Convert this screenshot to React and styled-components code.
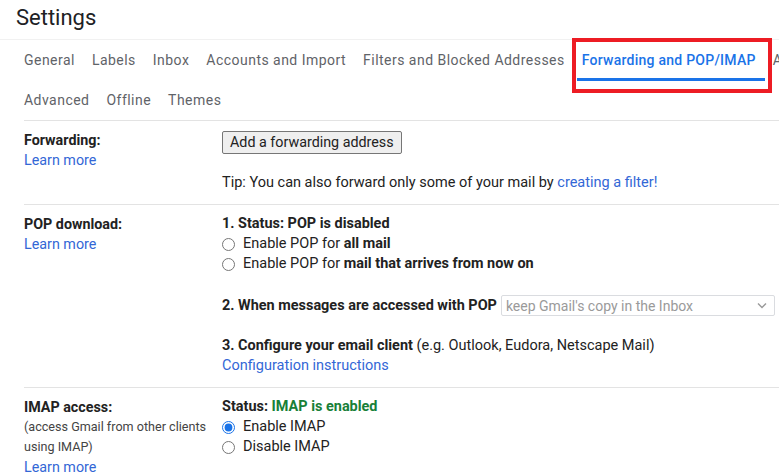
import React from "react";
import styled, { createGlobalStyle } from "styled-components";

const Global = createGlobalStyle`
  html, body { margin: 0; padding: 0; background: #fff; }
  body { font-family: Roboto, "Noto Sans", Arial, sans-serif; color: #222; overflow: hidden; }
  * { box-sizing: border-box; }
`;

const Page = styled.div`
  width: 779px;
  height: 476px;
  overflow: hidden;
  background: #fff;
`;

const TitleBar = styled.header`
  height: 40px;
  padding-left: 16px;
  display: flex;
  align-items: center;
  border-bottom: 1px solid #f1f1f1;
`;

const Title = styled.h1`
  margin: 0;
  font-family: Roboto, "Open Sans", sans-serif;
  font-size: 22px;
  font-weight: 400;
  color: #202124;
  line-height: 28px;
  margin-top: -4px;
`;

const TabRow = styled.nav`
  display: flex;
  flex-wrap: nowrap;
  height: 40px;
  padding-left: 16px;
  gap: 1px;
`;

const Tab = styled.div`
  position: relative;
  flex: none;
  height: 40px;
  padding: 0 8px;
  display: flex;
  align-items: center;
  white-space: nowrap;
  font-size: 14px;
  letter-spacing: ${(p) => (p.$active ? 0.25 : 0.47)}px;
  font-weight: ${(p) => (p.$active ? 500 : 400)};
  color: ${(p) => (p.$active ? "#1a73e8" : "#5f6368")};
  ${(p) =>
    p.$active &&
    `
    &::before {
      content: "";
      position: absolute;
      left: 3px;
      right: -1px;
      bottom: -1px;
      height: 3px;
      background: #1a73e8;
    }
    &::after {
      content: "";
      position: absolute;
      left: -2px;
      right: -8px;
      top: -2px;
      bottom: -13px;
      border: 4px solid #ed1c24;
    }
  `}
`;

const Body = styled.main`
  padding-left: 24px;
`;

const Section = styled.section`
  display: grid;
  grid-template-columns: 198px 1fr;
  padding: 9px 0 11px;
  border-top: 1px solid #e3e3e3;
  font-size: 14.5px;
  line-height: 20px;
`;

const LabelCol = styled.div`
  display: flex;
  flex-direction: column;
  font-size: 14.3px;
`;

const Label = styled.div`
  font-weight: 700;
  color: #222;
`;

const SubLabel = styled.div`
  font-size: 12.6px;
  color: #444;
`;

const Link = styled.a`
  color: #3367d6;
  text-decoration: none;
  cursor: pointer;
`;

const Content = styled.div`
  display: flex;
  flex-direction: column;
  color: #222;
`;

const Line = styled.div`
  display: flex;
  align-items: center;
  min-height: 20px;
  white-space: nowrap;
  margin-top: ${(p) => p.$gap || 0}px;
`;

const Strong = styled.b`
  font-weight: 700;
  font-size: 14.45px;
`;

const Green = styled.b`
  font-weight: 700;
  font-size: 14.45px;
  color: #188038;
`;

const Button = styled.button`
  align-self: flex-start;
  height: 23px;
  margin-top: 1px;
  padding: 0 7px;
  font-family: Roboto, sans-serif;
  font-size: 14.3px;
  color: #222;
  background: #efefef;
  border: 1px solid #767676;
  border-radius: 2px;
  line-height: 21px;
`;

const Radio = styled.input.attrs({ type: "radio" })`
  width: 13px;
  height: 13px;
  margin: 0 8px 0 0;
  accent-color: #1a73e8;
`;

const SelectBox = styled.div`
  position: relative;
  margin-left: 4px;
  width: 274px;
  height: 21px;
  border: 1px solid #dadce0;
  border-radius: 2px;
  display: flex;
  align-items: center;
  padding-left: 4px;
  color: #9a9a9a;
  font-size: 14px;
`;

const Chevron = styled.svg`
  position: absolute;
  right: 7px;
  top: 6px;
`;

export default function App() {
  return (
    <Page>
      <Global />
      <TitleBar>
        <Title>Settings</Title>
      </TitleBar>
      <TabRow>
        <Tab>General</Tab>
        <Tab>Labels</Tab>
        <Tab>Inbox</Tab>
        <Tab>Accounts and Import</Tab>
        <Tab>Filters and Blocked Addresses</Tab>
        <Tab $active>Forwarding and POP/IMAP</Tab>
        <Tab>Add-ons</Tab>
        <Tab>Chat and Meet</Tab>
      </TabRow>
      <TabRow>
        <Tab>Advanced</Tab>
        <Tab>Offline</Tab>
        <Tab>Themes</Tab>
      </TabRow>
      <Body>
        <Section>
          <LabelCol>
            <Label>Forwarding:</Label>
            <Link>Learn more</Link>
          </LabelCol>
          <Content>
            <Button>Add a forwarding address</Button>
            <Line $gap={19}>
              Tip: You can also forward only some of your mail by&nbsp;
              <Link>creating a filter!</Link>
            </Line>
          </Content>
        </Section>
        <Section>
          <LabelCol>
            <Label>POP download:</Label>
            <Link>Learn more</Link>
          </LabelCol>
          <Content>
            <Line>
              <Strong>1. Status: POP is disabled</Strong>
            </Line>
            <Line>
              <Radio name="pop" />
              Enable POP for&nbsp;<Strong>all mail</Strong>
            </Line>
            <Line>
              <Radio name="pop" />
              Enable POP for&nbsp;<Strong>mail that arrives from now on</Strong>
            </Line>
            <Line $gap={21}>
              <Strong>2. When messages are accessed with POP</Strong>
              <SelectBox>
                keep Gmail's copy in the Inbox
                <Chevron width="10" height="7" viewBox="0 0 10 7">
                  <path d="M1 1.5 L5 5.5 L9 1.5" fill="none" stroke="#9a9a9a" strokeWidth="1.4" />
                </Chevron>
              </SelectBox>
            </Line>
            <Line $gap={20}>
              <Strong>3. Configure your email client</Strong>&nbsp;(e.g. Outlook, Eudora, Netscape Mail)
            </Line>
            <Line>
              <Link>Configuration instructions</Link>
            </Line>
          </Content>
        </Section>
        <Section>
          <LabelCol>
            <Label>IMAP access:</Label>
            <SubLabel>(access Gmail from other clients</SubLabel>
            <SubLabel>using IMAP)</SubLabel>
            <Link>Learn more</Link>
          </LabelCol>
          <Content>
            <Line>
              <Strong>Status:</Strong>&nbsp;<Green>IMAP is enabled</Green>
            </Line>
            <Line>
              <Radio name="imap" defaultChecked />
              Enable IMAP
            </Line>
            <Line>
              <Radio name="imap" />
              Disable IMAP
            </Line>
          </Content>
        </Section>
      </Body>
    </Page>
  );
}
